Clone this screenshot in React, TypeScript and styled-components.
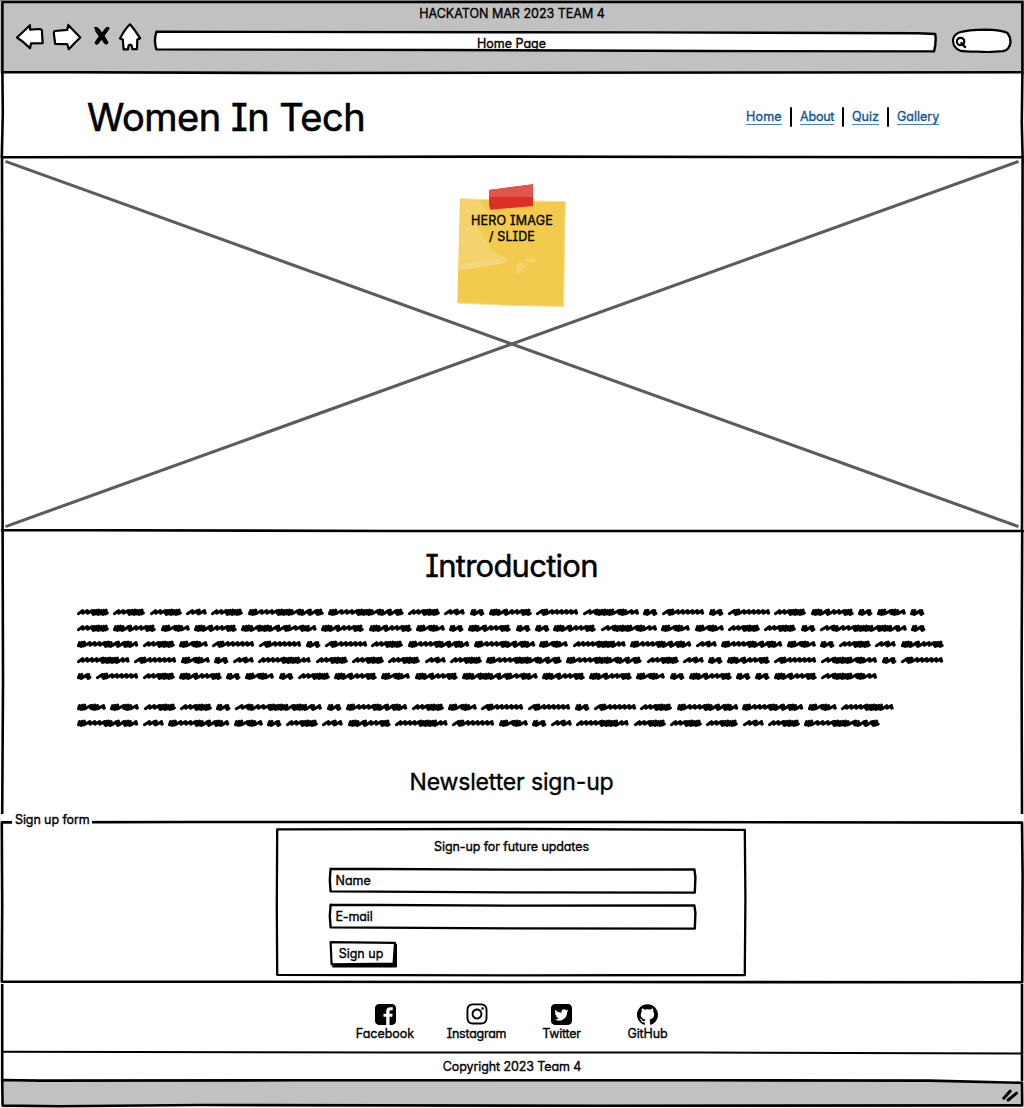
import React from "react";
import styled, { createGlobalStyle } from "styled-components";
import { FaInstagram } from "react-icons/fa6";
import { SiGithub } from "react-icons/si";

const GlobalStyle = createGlobalStyle`
  * { box-sizing: border-box; }
  body { margin: 0; background: #fff; overflow: hidden; }
`;

const GREY = "#c1c1c1";

const Page = styled.div`
  width: 1024px;
  height: 1108px;
  display: flex;
  flex-direction: column;
  background: #fff;
  color: #000;
  font-family: Inter, "Liberation Sans", sans-serif;
  font-feature-settings: "cv08", "cv11";
  font-size: 12.5px;
  line-height: 16px;
`;

const Section = styled.section<{ $h: number; $bg?: string }>`
  position: relative;
  flex: none;
  height: ${(p) => p.$h}px;
  background: ${(p) => p.$bg ?? "transparent"};
`;

/* Hand-drawn outlines painted behind the content of a box */
const Ink = styled.svg<{ $width?: number }>`
  position: absolute;
  inset: 0;
  width: 100%;
  height: 100%;
  overflow: visible;
  fill: none;
  stroke: #000;
  stroke-width: ${(p) => p.$width ?? 2.6};
  stroke-linecap: round;
  stroke-linejoin: round;
  pointer-events: none;
`;

const Text = styled.span<{ $track?: number }>`
  position: relative;
  display: block;
  line-height: 16px;
  letter-spacing: ${(p) => p.$track ?? 0}px;
  white-space: nowrap;
  -webkit-text-stroke: 0.35px currentColor;
`;

/* Browser chrome */
const Toolbar = styled(Section)`
  display: flex;
  flex-direction: column;
  padding: 6px 10px 0 14px;
`;

const WindowTitle = styled.div`
  display: flex;
  justify-content: center;
  height: 16px;
  padding-right: 4px;
`;

const Controls = styled.div`
  display: flex;
  height: 32px;
`;

const Tool = styled.svg<{ $w: number }>`
  flex: none;
  width: ${(p) => p.$w}px;
  height: 32px;
  fill: #fff;
  stroke: #000;
  stroke-width: 2.2;
  stroke-linejoin: round;
  stroke-linecap: round;
`;

const AddressBar = styled.div`
  position: relative;
  width: 796px;
  height: 32px;
  padding: 14px 69px 0 0;
  display: flex;
  justify-content: center;
`;

/* Header */
const Header = styled(Section)`
  display: flex;
  align-items: center;
  justify-content: space-between;
  padding: 4px 85px 0 87px;
`;

const Brand = styled.h1`
  position: relative;
  margin: 0;
  font-size: 38px;
  line-height: 48px;
  font-weight: 400;
  letter-spacing: -0.5px;
  -webkit-text-stroke: 0.6px #000;
`;

const Nav = styled.nav`
  position: relative;
  display: flex;
  align-items: center;
  gap: 8px;
`;

const NavLink = styled.a<{ $w: number; $track: number }>`
  width: ${(p) => p.$w}px;
  height: 15px;
  line-height: 13px;
  color: #0f5797;
  letter-spacing: ${(p) => p.$track}px;
  border-bottom: 1px solid #4c86b6;
  white-space: nowrap;
  -webkit-text-stroke: 0.35px #0f5797;
`;

const Divider = styled.i`
  width: 2px;
  height: 20px;
  border-radius: 1px;
  background: #000;
`;

/* Hero */
const Hero = styled(Section)`
  display: flex;
  justify-content: center;
  padding-right: 2px;
`;

const Note = styled.div`
  position: relative;
  width: 112px;
  height: 128px;
  margin-top: 24px;
  padding: 32px 0 0 2px;
  display: flex;
  flex-direction: column;
  align-items: center;
`;

const NoteArt = styled.svg`
  position: absolute;
  inset: 0;
  width: 112px;
  height: 128px;
`;

/* Introduction */
const Intro = styled(Section)`
  display: flex;
  flex-direction: column;
`;

const Heading = styled.h2<{ $size: number; $track: number; $top: number }>`
  position: relative;
  margin: ${(p) => p.$top}px 1px 0 0;
  text-align: center;
  font-size: ${(p) => p.$size}px;
  line-height: 40px;
  font-weight: 400;
  letter-spacing: ${(p) => p.$track}px;
  -webkit-text-stroke: ${(p) => p.$size / 65}px #000;
`;

const Paragraph = styled.div<{ $top: number }>`
  margin: ${(p) => p.$top}px 0 0 77px;
  display: flex;
  flex-direction: column;
`;

const ScribbleLine = styled.div`
  display: flex;
  gap: 4.97px;
  height: 15.85px;
  align-items: center;
`;

const ScribbleWord = styled.svg`
  flex: none;
  height: 10px;
  overflow: visible;
  fill: none;
  stroke: #000;
  stroke-width: 3;
  stroke-linecap: round;
  stroke-linejoin: round;
`;

/* Sign-up form */
const FormGroup = styled(Section)`
  display: flex;
  justify-content: center;
  padding: 14px 3px 0 0;
`;

const Legend = styled.div`
  position: absolute;
  left: 12px;
  top: -2px;
  padding: 0 3px;
  width: 80px;
  background: #fff;
`;

const Card = styled.div`
  position: relative;
  width: 470px;
  height: 149px;
  padding: 11px 49px 0 53px;
  display: flex;
  flex-direction: column;
  align-items: flex-start;
`;

const CardTitle = styled.div`
  align-self: center;
  height: 16px;
  margin: 0 2px 13px 0;
`;

const Field = styled.div`
  position: relative;
  width: 368px;
  height: 26px;
  margin-bottom: 10px;
  padding: 5px 7px;
`;

const Button = styled.button`
  position: relative;
  width: 69px;
  height: 26px;
  margin: 1px 0 0;
  padding: 0 4px 0 0;
  border: 0;
  background: none;
  display: flex;
  align-items: center;
  justify-content: center;
  font: inherit;
  font-feature-settings: inherit;
  color: inherit;
`;

/* Footer */
const Social = styled(Section)`
  display: flex;
  padding: 19.5px 0 0 340px;
`;

const SocialItem = styled.div<{ $w: number }>`
  width: ${(p) => p.$w}px;
  display: flex;
  flex-direction: column;
  align-items: center;
  gap: 1.5px;
`;

const IconBox = styled.span`
  height: 21px;
  display: flex;
  align-items: center;
`;

const Copyright = styled(Section)`
  display: flex;
  justify-content: center;
  padding-top: 7px;
`;

const SHAPES: Record<string, [number, string]> = {
  a: [14, "oo-o"],
  b: [20.3, "~-o-"],
  c: [28.4, "ooo-ooo-"],
  d: [31.4, "---oooooo"],
  e: [42.3, "oooo-o---ooo"],
  f: [41.7, "~oo------"],
  g: [52.2, "-----ooooooo--"],
  h: [60.8, "ooo----ooo-o-ooo-"],
  i: [75.2, "ooo----oooooo-oo-o-oo"],
  j: [55.6, "~-ooooooo-ooo--"],
  k: [86.4, "~-oo---ooooooo-ooooo-o-"],
  l: [75.2, "oooo-ooooo-o-oo--ooo-"],
};

const LINES_1 = [
  "dddbdiidbaefjafafdeaca",
  "deceleecaeaaejccddaka",
  "hdcffafdhhcghbhcadbe",
  "gfcabgdddbdiidbaefjaf",
  "afdeacadeceleecaeaaej",
];
const LINES_2 = ["ccddakahdcffafdhhcg", "hbhcadbegfcabgdddbdi"];

const WIDTH: Record<string, number> = { "~": 5.4, "-": 4.4, o: 2.2 };

function scribble(pattern: string, width: number) {
  const total = [...pattern].reduce((s, c) => s + WIDTH[c], 0);
  const k = (width - 2.4) / total;
  let x = 1.4;
  let d = `M${x} 6.7`;
  [...pattern].forEach((c, i) => {
    const step = WIDTH[c] * k;
    const low = c === "o" ? 6.9 + (i % 2) * 0.5 : 6.3;
    const high = c === "o" ? 3.6 - (i % 3) * 0.25 : 3.6;
    const end = x + step;
    if (c === "o") d += `L${x + 1.2} ${high}L${x + 0.5} ${low}L${end} ${low - 0.9}`;
    else d += `L${x + step * 0.85} ${high}L${end - 0.6} ${low}L${end} ${low - 0.4}`;
    x = end;
  });
  return d;
}

function Scribbles({ lines, top }: { lines: string[]; top: number }) {
  return (
    <Paragraph $top={top}>
      {lines.map((line) => (
        <ScribbleLine key={line}>
          {[...line].map((w, i) => (
            <ScribbleWord key={i} width={SHAPES[w][0]} height="10">
              <path d={scribble(SHAPES[w][1], SHAPES[w][0])} />
            </ScribbleWord>
          ))}
        </ScribbleLine>
      ))}
    </Paragraph>
  );
}

function Input({ label, track }: { label: string; track?: number }) {
  return (
    <Field>
      <Ink $width={2.4}>
        <path d="M1.6 .8L180 1.6L365.4 1.4L366.4 9L365.8 24.6L180 24.4L1.6 23.4L.8 12L1.6 .8" />
      </Ink>
      <Text $track={track}>{label}</Text>
    </Field>
  );
}

const NAV: [string, number, number][] = [
  ["Home", 36, 0.2],
  ["About", 34, -0.2],
  ["Quiz", 27, 0],
  ["Gallery", 42, 0],
];

const FacebookIcon = () => (
  <svg width="21" height="21" viewBox="128 128 1536 1536">
    <path d="M1376 128q119 0 203.5 84.5t84.5 203.5v960q0 119-84.5 203.5t-203.5 84.5h-188v-595h199l30-232h-229v-148q0-56 23.5-84t91.5-28l122-1v-207q-63-9-178-9-136 0-217.5 80t-81.5 226v171h-200v232h200v595h-532q-119 0-203.5-84.5t-84.5-203.5v-960q0-119 84.5-203.5t203.5-84.5h960z" />
  </svg>
);

const TwitterIcon = () => (
  <svg width="21" height="21" viewBox="128 128 1536 1536">
    <path d="M1408 610q-56 25-121 34 68-40 93-117-65 38-134 51-61-66-153-66-87 0-148.5 61.5t-61.5 148.5q0 29 5 48-129-7-242-65t-192-155q-29 50-29 106 0 114 91 175-47-1-100-26v2q0 75 50 133.5t123 72.5q-29 8-51 8-13 0-39-4 21 63 74.5 104t121.5 42q-116 90-261 90-26 0-50-3 148 94 322 94 112 0 210-35.5t168-95 120.5-137 75-162 24.5-168.5q0-18-1-27 63-45 105-109zm256-194v960q0 119-84.5 203.5t-203.5 84.5h-960q-119 0-203.5-84.5t-84.5-203.5v-960q0-119 84.5-203.5t203.5-84.5h960q119 0 203.5 84.5t84.5 203.5z" />
  </svg>
);

export default function App() {
  return (
    <Page>
      <GlobalStyle />
      <Toolbar $h={73} $bg={GREY}>
        <Ink>
          <path d="M2.4 73V2L1022.4 2V73M2.4 72L300 73L1022 72.3" />
          <path d="M0 .4H1024" stroke="#7b807b" strokeWidth="1" />
        </Ink>
        <WindowTitle>
          <Text>HACKATON MAR 2023 TEAM 4</Text>
        </WindowTitle>
        <Controls>
          <Tool $w={34} viewBox="14 22 34 32">
            <path d="M17 37.5L30 25.2V29.6L40 29Q42.4 29 42 33L42.7 43.2L31 43.4L30 48.2Q24 42 17 37.5Z" />
          </Tool>
          <Tool $w={38} viewBox="48 22 38 32">
            <path d="M80.3 37.5L68.2 25L67.3 29.8L55 31Q53.5 31 54 35L55.2 44L67.3 44.2L68.8 49.3Q74 43.5 80.3 37.5Z" />
          </Tool>
          <Tool $w={30} viewBox="86 22 30 32">
            <path
              d="M94.8 27.6Q97 26.5 99.5 29.5L102.1 33.1L106 27.8Q109 26.3 109.2 28.6L104.1 35.8L108 42.6Q107.5 45 105 43.8L101.6 39.4L97.5 44.2Q95 44.8 95.1 42.4L99.2 36.2Q95 31.5 94.8 27.6Z"
              fill="#000"
              strokeWidth="1"
            />
          </Tool>
          <Tool $w={32} viewBox="116 22 32 32">
            <path d="M130 24.3Q135 30 140.2 38.4L137.3 39.6L137 49.2H132.4L131.6 45.4L130 44.6L128.6 45.6L128 49.3H123.6L122.8 39.6L120 38.4Q125 29 130 24.3Z" />
          </Tool>
          <AddressBar>
            <Ink $width={2.4}>
              <path
                d="M8.4 9.8L500 10.4L770 11.3L787.2 12Q788.5 20 786 29.4L560 29L300 28L8.4 27.4Q5.5 19 8.4 9.8Z"
                fill="#fff"
              />
            </Ink>
            <Text>Home Page</Text>
          </AddressBar>
          <Tool $w={70} viewBox="944 22 70 32">
            <path d="M953 41Q953 35 959 32.5Q968 29.8 985 29.6Q1002 29.8 1007.5 33Q1010.6 37 1010.5 42.5Q1009.5 50 1003 51.2Q990 52.6 978 51.6Q966 51.8 960 50.6Q953.5 48 953 41Z" />
            <circle cx="960.6" cy="41.5" r="3.7" fill="none" strokeWidth="2.2" />
            <path d="M961.5 43L965 47" strokeWidth="2.4" />
          </Tool>
        </Controls>
      </Toolbar>

      <Header $h={84}>
        <Ink>
          <path d="M2.4 0L2.8 40L1.8 84M1022.4 0L1021.8 50L1022.6 84" />
        </Ink>
        <Brand>Women In Tech</Brand>
        <Nav>
          {NAV.map(([label, w, track], i) => (
            <React.Fragment key={label}>
              {i > 0 && <Divider />}
              <NavLink $w={w} $track={track}>
                {label}
              </NavLink>
            </React.Fragment>
          ))}
        </Nav>
      </Header>

      <Hero $h={374}>
        <Ink>
          <path d="M2 .3L500 -.4L1022.6 .3L1022 374M2 0L2.6 374M2 373L400 374L1023 374" />
          <path d="M5.5 4.4L1018.5 369.6M1018.5 4.4L5.5 369.6" stroke="#5c5c5c" strokeWidth="3.1" strokeLinecap="butt" />
        </Ink>
        <Note>
          <NoteArt viewBox="455.5 181 112 128">
            <path d="M460.5 198.6Q510 202 566 201.4L564.2 306.8L510 305.6L457.8 303Z" fill="#f1ca4e" />
            <path d="M461 199.6L482 201Q484 208 490 214Q470 212 474 220Q480 232 490 244Q486 248 507 258Q512 262 494 265Q474 266 459 271Z" fill="#f4d26c" />
            <path d="M459 266Q480 258 508 261Q500 265 480 267Q466 270 458.6 270Z" fill="#f5d87d" />
            <path d="M517 264Q521 260 527 267Q522 270 517 276ZM525 259Q533 256 538 261Q532 264 525 261Z" fill="#f4d26c" />
            <path d="M460.5 198.8L565.5 201.6M457.9 303L510 305.4L564 306.4L565.8 202" fill="none" stroke="#f6df93" strokeWidth="1" />
            <path d="M489.5 190L533.5 184.2L533.5 206L490.9 209.8L489.5 205Z" fill="#dc2f27" />
            <path d="M489.5 190L533.5 184.2V197H489.5Z" fill="#e0554c" />
          </NoteArt>
          <Text $track={0.2}>HERO IMAGE</Text>
          <Text $track={0.1}>/ SLIDE</Text>
        </Note>
      </Hero>

      <Intro $h={283}>
        <Ink>
          <path d="M2.6 0L3 150L2.2 283M1022.2 0L1021.6 140L1022 283" strokeLinecap="butt" />
        </Ink>
        <Heading $size={31} $track={-0.75} $top={15}>Introduction</Heading>
        <Scribbles lines={LINES_1} top={18.5} />
        <Scribbles lines={LINES_2} top={15.8} />
        <Heading $size={23} $track={-0.15} $top={30.7}>Newsletter sign-up</Heading>
      </Intro>

      <FormGroup $h={170}>
        <Ink>
          <path d="M1.8 8.4L200 8L600 8L1022 8.6L1022.6 60L1022.2 168.2L600 168L1.8 167.6L2.2 90L1.8 8.4" />
        </Ink>
        <Legend>
          <Text $track={-0.1}>Sign up form</Text>
        </Legend>
        <Card>
          <Ink $width={2.3}>
            <path d="M1.2 1.4L240 1L468.8 1.8L469.4 70L468.8 147L240 147.4L1.2 146.8L.8 80L1.2 1.4" />
          </Ink>
          <CardTitle>
            <Text $track={-0.1}>Sign-up for future updates</Text>
          </CardTitle>
          <Input label="Name" />
          <Input label="E-mail" track={-0.15} />
          <Button>
            <Ink $width={2.2}>
              <path d="M5 22H64.5V3H67.5V26H4Z" fill="#000" stroke="#000" strokeWidth="1" />
              <path d="M1.6 1.2L66 1.8L64.6 22.6L2.6 23.4Z" fill="#fff" />
            </Ink>
            <Text>Sign up</Text>
          </Button>
        </Card>
      </FormGroup>

      <Social $h={68}>
        <Ink>
          <path d="M2.2 0V68M1022 0V68" strokeLinecap="butt" />
          <path d="M2 67.8L400 68.6L700 68.6L1022 69.4" strokeWidth="2" />
        </Ink>
        <SocialItem $w={90}>
          <IconBox><FacebookIcon /></IconBox>
          <Text>Facebook</Text>
        </SocialItem>
        <SocialItem $w={93}>
          <IconBox><FaInstagram size={24} /></IconBox>
          <Text $track={-0.25}>Instagram</Text>
        </SocialItem>
        <SocialItem $w={77}>
          <IconBox><TwitterIcon /></IconBox>
          <Text $track={-0.25}>Twitter</Text>
        </SocialItem>
        <SocialItem $w={95}>
          <IconBox><SiGithub size={21} /></IconBox>
          <Text $track={-0.1}>GitHub</Text>
        </SocialItem>
      </Social>

      <Copyright $h={28}>
        <Ink>
          <path d="M2.2 0V28M1022 0V28" />
        </Ink>
        <Text $track={-0.1}>Copyright 2023 Team 4</Text>
      </Copyright>

      <Section $h={27}>
        <Ink>
          <path
            d="M2.2 0L40 .6L300 .3L700 .3L930 .6L1022 2.8L1022.2 25.4L600 25.8L200 25L60 26.2L2.6 25.6Z"
            fill={GREY}
          />
          <path d="M1003.8 18.2L1010.2 11M1008.2 20L1016.6 13.2" strokeWidth="3" />
        </Ink>
      </Section>
    </Page>
  );
}
